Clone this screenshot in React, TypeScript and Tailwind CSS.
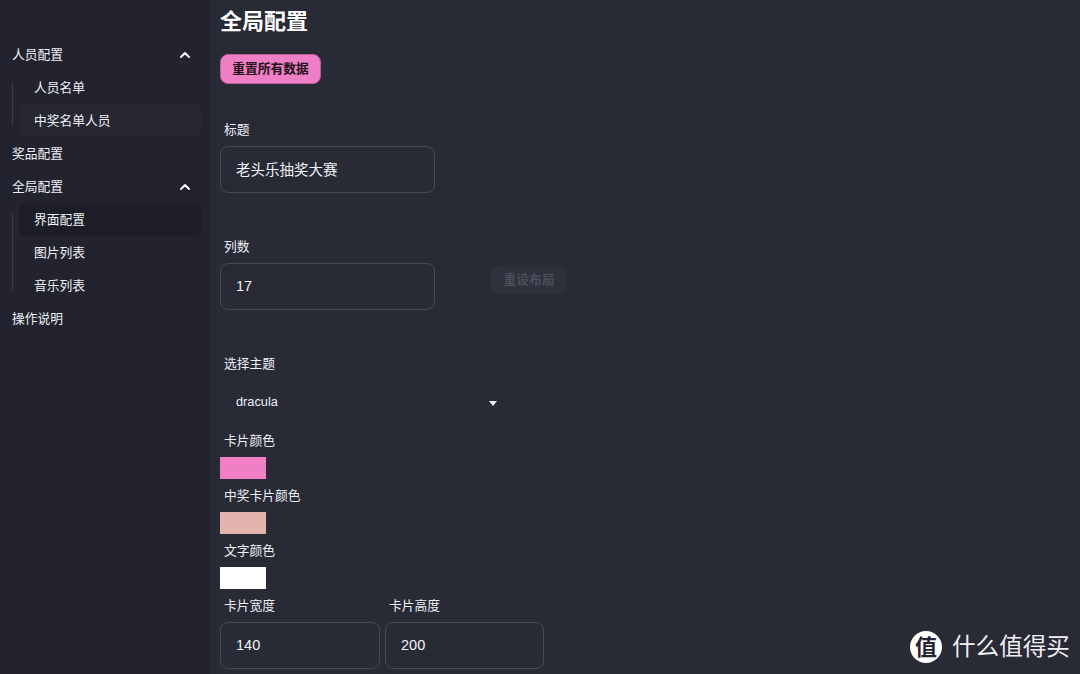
import React from 'react';
import { ChevronUp } from 'lucide-react';

const font = "font-['Liberation_Sans','Noto_Sans_CJK_SC',sans-serif]";

function GroupTitle({ label, open }: { label: string; open?: boolean }) {
  return (
    <div className="h-[33px] pl-3 pr-[17px] flex items-center justify-between text-[12.75px] text-[#eef0f6]">
      <span>{label}</span>
      {open && <ChevronUp size={16} strokeWidth={3} className="text-white" />}
    </div>
  );
}

function SubMenu({ items }: { items: { label: string; tone?: string }[] }) {
  return (
    <div className="ml-3 mr-2 flex">
      <div className="w-px my-[11px] mr-[6px] bg-[#3a3c48]" />
      <div className="flex-1 flex flex-col">
        {items.map(item => (
          <div
            key={item.label}
            className={`h-[33px] pl-[15px] flex items-center rounded-lg text-[12.75px] text-[#eef0f6] ${item.tone ?? ''}`}
          >
            {item.label}
          </div>
        ))}
      </div>
    </div>
  );
}

function Label({ text }: { text: string }) {
  return <label className="h-[33px] pl-1 flex items-center text-[12.75px] text-[#eef0f6]">{text}</label>;
}

function Field({ label, value, width = 'w-[215px]' }: { label: string; value: string; width?: string }) {
  return (
    <div className={`flex flex-col ${width}`}>
      <Label text={label} />
      <input
        readOnly
        value={value}
        className="h-[47px] w-full px-[15px] pb-[2px] rounded-lg border border-[#474955] bg-transparent text-[14.5px] text-[#f2f3f8] outline-none"
      />
    </div>
  );
}

function Swatch({ label, color }: { label: string; color: string }) {
  return (
    <div className="flex flex-col">
      <Label text={label} />
      <div className={`w-[46px] h-[22px] ${color}`} />
    </div>
  );
}

export default function App() {
  return (
    <div className={`relative flex h-[674px] w-[1080px] overflow-hidden bg-[#282a36] ${font}`}>
      <aside className="w-[210px] shrink-0 bg-[#22232e] pt-[38px]">
        <GroupTitle label="人员配置" open />
        <SubMenu items={[{ label: '人员名单' }, { label: '中奖名单人员', tone: 'bg-[#262732]' }]} />
        <GroupTitle label="奖品配置" />
        <GroupTitle label="全局配置" open />
        <SubMenu items={[{ label: '界面配置', tone: 'bg-[#1c1d26]' }, { label: '图片列表' }, { label: '音乐列表' }]} />
        <GroupTitle label="操作说明" />
      </aside>

      <main className="flex-1 pl-[10px] flex flex-col">
        <h2 className="h-[42px] flex items-center text-[22px] font-bold text-white">全局配置</h2>
        <button className="mt-3 w-[101px] h-[30px] rounded-lg bg-[#ee7ec5] border border-[#bd5f9c] text-[12.75px] font-bold text-[#1e1016]">
          重置所有数据
        </button>

        <div className="mt-[29px]">
          <Field label="标题" value="老头乐抽奖大赛" />
        </div>

        <div className="mt-[37px] flex items-start">
          <Field label="列数" value="17" />
          <button className="ml-14 mt-[35px] w-[76px] h-[29px] rounded-lg bg-[#2e303c] text-[12.75px] font-bold text-[#4c4e5a]">
            重设布局
          </button>
        </div>

        <div className="mt-[37px] flex flex-col">
          <Label text="选择主题" />
          <div className="h-[44px] w-[287px] pl-4 pr-[10px] flex items-center justify-between text-[12.75px] text-[#eef0f6]">
            <span>dracula</span>
            <svg width="8" height="5" viewBox="0 0 8 5" className="mt-[2px]">
              <path d="M0 0h8L4 5z" fill="#f2f3f8" />
            </svg>
          </div>
        </div>

        <Swatch label="卡片颜色" color="bg-[#f07fc6]" />
        <Swatch label="中奖卡片颜色" color="bg-[#e3b3ae]" />
        <Swatch label="文字颜色" color="bg-white" />

        <div className="flex gap-[5px]">
          <Field label="卡片宽度" value="140" width="w-[160px]" />
          <Field label="卡片高度" value="200" width="w-[159px]" />
        </div>
      </main>

      {/* watermark */}
      <div className="absolute left-[910px] top-[631px] flex items-center gap-[10px]">
        <div className="w-8 h-8 rounded-full bg-white flex items-center justify-center text-[22px] font-bold text-[#22232e]">
          值
        </div>
        <span className="text-[23.6px] leading-8 text-[#f0f0f2]">什么值得买</span>
      </div>
    </div>
  );
}
